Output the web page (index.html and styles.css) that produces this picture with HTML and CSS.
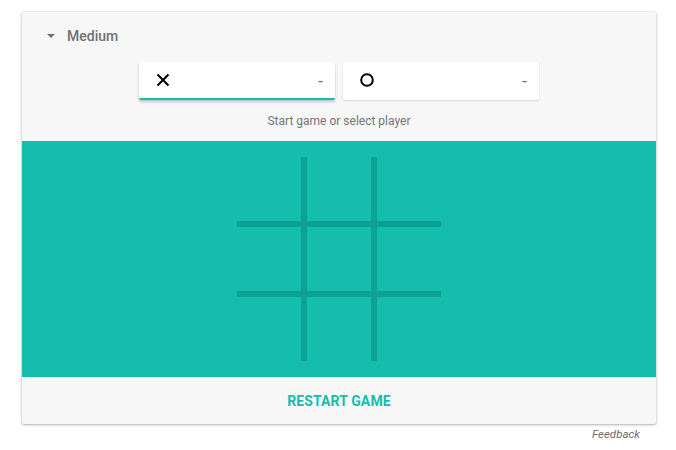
FILE: index.html
```html
<!DOCTYPE html>
<html>
<head>
<meta charset="utf-8">
<link rel="stylesheet" href="styles.css">
</head>
<body>
<div class="wrap">
  <div class="card">
    <div class="header">
      <span class="caret"></span>
      <span class="level">Medium</span>
    </div>
    <div class="players">
      <div class="player active">
        <svg class="mark" width="14" height="14" viewBox="0 0 14 14"><path d="M1.5 1.5L12.5 12.5M12.5 1.5L1.5 12.5" stroke="#000" stroke-width="2" fill="none"/></svg>
        <span class="score">-</span>
      </div>
      <div class="player">
        <svg class="mark" width="14" height="14" viewBox="0 0 14 14"><circle cx="7" cy="7" r="5.8" stroke="#000" stroke-width="2" fill="none"/></svg>
        <span class="score">-</span>
      </div>
    </div>
    <div class="status">Start game or select player</div>
    <div class="board">
      <div class="grid">
        <div class="cell"></div><div class="cell"></div><div class="cell"></div>
        <div class="cell"></div><div class="cell"></div><div class="cell"></div>
        <div class="cell"></div><div class="cell"></div><div class="cell"></div>
      </div>
    </div>
    <div class="footer">
      <span class="restart">RESTART GAME</span>
    </div>
  </div>
  <div class="feedback">Feedback</div>
</div>
</body>
</html>
```

FILE: styles.css
```css
html, body {
  margin: 0;
  padding: 0;
  background: #fff;
  font-family: Roboto, "Liberation Sans", Arial, sans-serif;
}
.wrap {
  padding: 12px 20px 0 22px;
  width: 634px;
}
.card {
  background: #f7f7f7;
  border-radius: 2px;
  box-shadow: 0 1px 3px rgba(0,0,0,0.28), 0 0 0 1px rgba(0,0,0,0.04);
}
.header {
  height: 48px;
  display: flex;
  align-items: center;
  padding-left: 25px;
}
.caret {
  width: 0;
  height: 0;
  border-left: 4px solid transparent;
  border-right: 4px solid transparent;
  border-top: 4px solid #707070;
  margin-right: 12px;
}
.level {
  font-size: 14px;
  font-weight: 500;
  color: #707070;
}
.players {
  display: flex;
  justify-content: center;
  gap: 8px;
  margin-top: 2px;
}
.player {
  width: 196px;
  height: 38px;
  box-sizing: border-box;
  background: #fff;
  border-radius: 2px;
  box-shadow: 0 1px 2px rgba(0,0,0,0.14);
  display: flex;
  align-items: center;
  justify-content: space-between;
  padding: 0 12px 2px 17px;
}
.player.active {
  border-bottom: 2px solid #14bdac;
  padding-bottom: 0;
  box-shadow: 0 2px 3px rgba(0,0,0,0.22);
}
.score {
  font-size: 18px;
  color: #757575;
}
.status {
  text-align: center;
  font-size: 12px;
  line-height: 16px;
  color: #757575;
  padding: 13px 0 12px;
}
.board {
  background: #14bdac;
  height: 236px;
  display: flex;
  align-items: center;
  justify-content: center;
}
.grid {
  display: grid;
  grid-template-columns: 64px 64px 64px;
  grid-template-rows: 64px 64px 64px;
  gap: 6px;
  background: #0da192;
}
.cell {
  background: #14bdac;
}
.footer {
  height: 47px;
  display: flex;
  align-items: center;
  justify-content: center;
}
.restart {
  font-size: 14px;
  font-weight: 700;
  color: #14bdac;
  letter-spacing: 0.1px;
}
.feedback {
  text-align: right;
  font-size: 11.5px;
  font-style: italic;
  color: #6e6e6e;
  padding: 3px 16px 0 0;
}
```
